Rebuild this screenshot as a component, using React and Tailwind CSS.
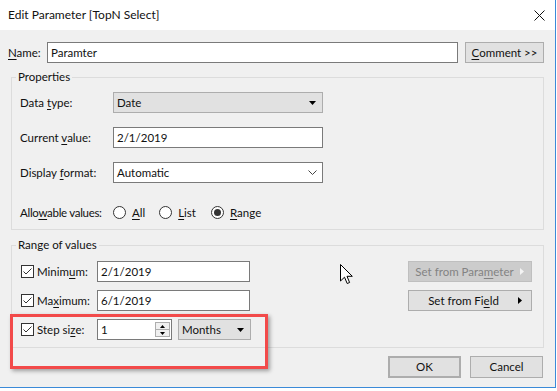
import React from "react";

const U = ({ children }) => <span className="underline underline-offset-[2px]">{children}</span>;

const TextBox = ({ w, children }) => (
  <div className={`${w} h-[21px] bg-white border border-[#7a7a7a] flex items-center px-[3px] leading-none`}>{children}</div>
);

const DownTri = ({ color = "#000" }) => (
  <svg width="7" height="4" viewBox="0 0 7 4"><path d="M0 0H7L3.5 4Z" fill={color} /></svg>
);

const RightTri = ({ color = "#000" }) => (
  <svg width="4" height="7" viewBox="0 0 4 7"><path d="M0 0L4 3.5L0 7Z" fill={color} /></svg>
);

const GraySelect = ({ w, children }) => (
  <div className={`${w} h-[21px] bg-[#e1e1e1] border border-[#adadad] flex items-center justify-between pl-[3px] pr-[6px] leading-none`}>
    <span>{children}</span>
    <DownTri />
  </div>
);

const Check = () => (
  <div className="w-[13px] h-[13px] border border-[#333333] bg-white flex items-center justify-center shrink-0">
    <svg width="11" height="11" viewBox="0 0 11 11"><path d="M1.5 5.5L4 8L9.5 2.5" fill="none" stroke="#333" strokeWidth="1" /></svg>
  </div>
);

const Radio = ({ on }) => (
  <div className="w-[13px] h-[13px] rounded-full border border-[#333333] bg-white flex items-center justify-center shrink-0">
    {on && <div className="w-[7px] h-[7px] rounded-full bg-[#333333]" />}
  </div>
);

const Btn = ({ w, children, cls = "" }) => (
  <div className={`${w} h-[22px] bg-[#e1e1e1] border border-[#adadad] flex items-center justify-center leading-none ${cls}`}>{children}</div>
);

export default function App() {
  return (
    <div className="w-[557px] h-[391px] bg-white relative overflow-hidden text-[11.5px] text-[#111] font-['Lato',sans-serif]">
      <div className="w-[556px] h-[388px] flex flex-col border-r border-b border-[#3b8ad8]">
        <div className="h-[30px] bg-white flex items-center justify-between pl-[8px] pr-[10px] shrink-0">
          <span className="text-[12px]">Edit Parameter [TopN Select]</span>
          <svg width="11" height="11" viewBox="0 0 11 11"><path d="M0.5 0.5L10.5 10.5M10.5 0.5L0.5 10.5" stroke="#111" strokeWidth="1" /></svg>
        </div>
        <div className="flex-1 bg-[#f0f0f0] flex flex-col">
          <div className="mt-[12px] flex items-center h-[21px]">
            <span className="w-[47px] pl-[8px]"><U>N</U>ame:</span>
            <TextBox w="w-[411px]">Paramter</TextBox>
            <Btn w="w-[79px] ml-[7px]" cls="!h-[21px]"><U>C</U>omment &gt;&gt;</Btn>
          </div>

          <fieldset className="mt-[6px] ml-[11px] w-[533px] border border-[#dcdcdc] pl-[8px] pt-[7px] pb-[6px]">
            <legend className="-ml-[4px] px-[2px] leading-[16px]">Properties</legend>
            <div className="flex flex-col gap-[14px]">
              <div className="flex items-center h-[21px]">
                <span className="w-[93px]">Data <U>t</U>ype:</span>
                <GraySelect w="w-[210px]">Date</GraySelect>
              </div>
              <div className="flex items-center h-[21px]">
                <span className="w-[93px]">Current <U>v</U>alue:</span>
                <TextBox w="w-[210px]">2/1/2019</TextBox>
              </div>
              <div className="flex items-center h-[21px]">
                <span className="w-[93px]">Display <U>f</U>ormat:</span>
                <div className="w-[210px] h-[21px] bg-white border border-[#7a7a7a] flex items-center justify-between pl-[3px] pr-[5px] leading-none">
                  <span>Automatic</span>
                  <svg width="9" height="5" viewBox="0 0 9 5"><path d="M0.5 0.5L4.5 4.5L8.5 0.5" fill="none" stroke="#444" strokeWidth="1" /></svg>
                </div>
              </div>
              <div className="flex items-center h-[21px] mt-[5px]">
                <span className="w-[93px] tracking-[-0.3px]">Allo<U>w</U>able values:</span>
                <Radio />
                <span className="ml-[6px]"><U>A</U>ll</span>
                <span className="ml-[14px]"><Radio /></span>
                <span className="ml-[6px]"><U>L</U>ist</span>
                <span className="ml-[15px]"><Radio on /></span>
                <span className="ml-[6px]"><U>R</U>ange</span>
              </div>
            </div>
          </fieldset>

          <fieldset className="mt-[7px] ml-[11px] w-[533px] border border-[#dcdcdc] pl-[9px] pr-[11px] pt-[8px] pb-[7px]">
            <legend className="ml-[-5px] px-[2px] leading-[16px]">Range of values</legend>
            <div className="flex justify-between">
              <div className="flex flex-col gap-[8px]">
                <div className="flex items-center h-[21px]">
                  <Check />
                  <span className="ml-[3px] w-[60px]">Minim<U>u</U>m:</span>
                  <TextBox w="w-[153px]">2/1/2019</TextBox>
                </div>
                <div className="flex items-center h-[21px]">
                  <Check />
                  <span className="ml-[3px] w-[60px]">Ma<U>x</U>imum:</span>
                  <TextBox w="w-[153px]">6/1/2019</TextBox>
                </div>
                <div className="flex items-center h-[21px]">
                  <Check />
                  <span className="ml-[3px] w-[60px]">Step si<U>z</U>e:</span>
                  <div className="w-[75px] h-[21px] bg-white border border-[#7a7a7a] flex items-center justify-between pl-[3px] pr-[1px] leading-none">
                    <span>1</span>
                    <div className="w-[15px] h-[15px] border border-[#adadad] bg-[#f0f0f0] flex flex-col">
                      <div className="flex-1 flex items-center justify-center border-b border-[#adadad]">
                        <svg width="5" height="3" viewBox="0 0 5 3"><path d="M0 3H5L2.5 0Z" fill="#000" /></svg>
                      </div>
                      <div className="flex-1 flex items-center justify-center">
                        <svg width="5" height="3" viewBox="0 0 5 3"><path d="M0 0H5L2.5 3Z" fill="#000" /></svg>
                      </div>
                    </div>
                  </div>
                  <GraySelect w="w-[73px] ml-[6px]">Months</GraySelect>
                </div>
              </div>
              <div className="flex flex-col gap-[8px]">
                <div className="w-[124px] h-[21px] bg-[#cccccc] border border-[#bfbfbf] flex items-center pr-[7px] leading-none text-[#838383]">
                  <span className="flex-1 text-center">Set from Para<U>m</U>eter</span>
                  <RightTri color="#f4f4f4" />
                </div>
                <div className="w-[124px] h-[21px] bg-[#e1e1e1] border border-[#adadad] flex items-center pr-[9px] leading-none">
                  <span className="flex-1 text-center">Set from Fi<U>e</U>ld</span>
                  <RightTri />
                </div>
              </div>
            </div>
          </fieldset>

          <div className="mt-[8px] flex justify-end gap-[9px] pr-[12px]">
            <Btn w="w-[73px]" cls="border-2 border-[#0078d7]">OK</Btn>
            <Btn w="w-[73px]">Cancel</Btn>
          </div>
        </div>
      </div>

      <div className="absolute left-[10px] top-[314px] w-[258px] h-[55px] border-[3px] border-[#f24a4a] shadow-[2px_2px_4px_rgba(0,0,0,0.35)]" />

      <svg className="absolute left-[340px] top-[264px]" width="13" height="21" viewBox="0 0 13 21">
        <path d="M0.5 0.5V17L4.5 13.2L7.2 19.5L9.6 18.5L7 12.3H12.3Z" fill="#fff" stroke="#000" strokeWidth="1" strokeLinejoin="miter" />
      </svg>
    </div>
  );
}
